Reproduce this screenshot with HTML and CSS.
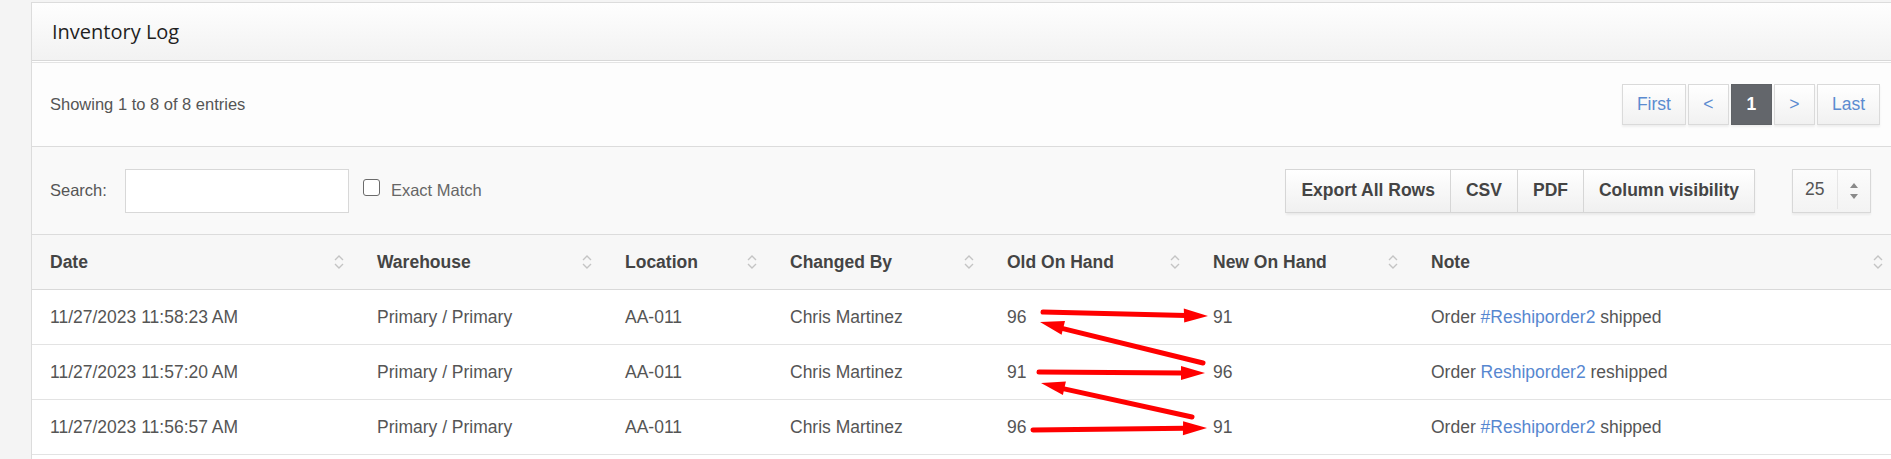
FILE: index.html
```html
<!DOCTYPE html>
<html lang="en">
<head>
    <meta charset="utf-8"/>
    <title>Inventory Log</title>
    <link rel="stylesheet" href="styles.css">
</head>
<body>
<div class="panel">
    <div class="panelHeading">
        <h2 class="panelTitle">Inventory Log</h2>
    </div>

    <div class="infoBar">
        <div class="info">Showing 1 to 8 of 8 entries</div>
        <div class="pager">
            <a class="pageBtn">First</a>
            <a class="pageBtn">&lt;</a>
            <a class="pageBtn current">1</a>
            <a class="pageBtn">&gt;</a>
            <a class="pageBtn">Last</a>
        </div>
    </div>

    <div class="toolbar">
        <label class="searchLabel">Search:</label>
        <input type="text" class="searchBox"/>
        <span class="checkBox"></span>
        <span class="exactLabel">Exact Match</span>

        <div class="exportGroup">
            <button class="exportBtn">Export All Rows</button>
            <button class="exportBtn">CSV</button>
            <button class="exportBtn">PDF</button>
            <button class="exportBtn">Column visibility</button>
        </div>
        <div class="pageLength">
            <span class="lengthValue">25</span>
            <span class="spinner">
                <svg width="10" height="18" viewBox="0 0 10 18"><path d="M5 1 L9 6 L1 6 Z M5 17 L9 12 L1 12 Z" fill="#8a8a8a"/></svg>
            </span>
        </div>
    </div>

    <table class="logTable">
        <colgroup>
            <col style="width:327px">
            <col style="width:248px">
            <col style="width:165px">
            <col style="width:217px">
            <col style="width:206px">
            <col style="width:218px">
            <col>
        </colgroup>
        <thead>
        <tr>
            <th><div class="thInner">Date<svg class="sortIcon" viewBox="0 0 12 18"><path d="M2 7 L6 3 L10 7 M2 11 L6 15 L10 11"/></svg></div></th>
            <th><div class="thInner">Warehouse<svg class="sortIcon" viewBox="0 0 12 18"><path d="M2 7 L6 3 L10 7 M2 11 L6 15 L10 11"/></svg></div></th>
            <th><div class="thInner">Location<svg class="sortIcon" viewBox="0 0 12 18"><path d="M2 7 L6 3 L10 7 M2 11 L6 15 L10 11"/></svg></div></th>
            <th><div class="thInner">Changed By<svg class="sortIcon" viewBox="0 0 12 18"><path d="M2 7 L6 3 L10 7 M2 11 L6 15 L10 11"/></svg></div></th>
            <th><div class="thInner">Old On Hand<svg class="sortIcon" viewBox="0 0 12 18"><path d="M2 7 L6 3 L10 7 M2 11 L6 15 L10 11"/></svg></div></th>
            <th><div class="thInner">New On Hand<svg class="sortIcon" viewBox="0 0 12 18"><path d="M2 7 L6 3 L10 7 M2 11 L6 15 L10 11"/></svg></div></th>
            <th><div class="thInner">Note<svg class="sortIcon" viewBox="0 0 12 18"><path d="M2 7 L6 3 L10 7 M2 11 L6 15 L10 11"/></svg></div></th>
        </tr>
        </thead>
        <tbody>
        <tr>
            <td>11/27/2023 11:58:23 AM</td>
            <td>Primary / Primary</td>
            <td>AA-011</td>
            <td>Chris Martinez</td>
            <td>96</td>
            <td>91</td>
            <td>Order <a class="orderLink">#Reshiporder2</a> shipped</td>
        </tr>
        <tr>
            <td>11/27/2023 11:57:20 AM</td>
            <td>Primary / Primary</td>
            <td>AA-011</td>
            <td>Chris Martinez</td>
            <td>91</td>
            <td>96</td>
            <td>Order <a class="orderLink">Reshiporder2</a> reshipped</td>
        </tr>
        <tr>
            <td>11/27/2023 11:56:57 AM</td>
            <td>Primary / Primary</td>
            <td>AA-011</td>
            <td>Chris Martinez</td>
            <td>96</td>
            <td>91</td>
            <td>Order <a class="orderLink">#Reshiporder2</a> shipped</td>
        </tr>
        </tbody>
    </table>
</div>

<!-- red annotation arrows drawn over the screenshot -->
<svg class="annotations" width="1891" height="459" viewBox="0 0 1891 459">
    <g stroke="#f00" stroke-width="5" stroke-linecap="round" fill="none">
        <line x1="1043" y1="312" x2="1186" y2="315.4"/>
        <line x1="1203" y1="363" x2="1062" y2="328.4"/>
        <line x1="1039" y1="372" x2="1183" y2="372.9"/>
        <line x1="1192" y1="417" x2="1063" y2="388.6"/>
        <line x1="1033" y1="430" x2="1185" y2="428.3"/>
    </g>
    <g fill="#f00">
        <polygon points="1208,316 1183.8,308.4 1184.2,322.4"/>
        <polygon points="1040,322 1065.0,321.1 1061.6,334.7"/>
        <polygon points="1205,373 1181,365.9 1181,379.9"/>
        <polygon points="1041,383 1065.9,381.5 1062.9,395.1"/>
        <polygon points="1207,428 1183.1,421.3 1182.9,435.3"/>
    </g>
</svg>
</body>
</html>
```

FILE: styles.css
```css
body{
    margin: 0;
    background: #f4f4f4;
    font-family: "Liberation Sans", Arial, sans-serif;
    font-size: 17.5px;
    color: #555;
    overflow: hidden;
    position: relative;
    height: 459px;
}
.panel{
    margin: 2px -8px 0 31px;
    padding-bottom: 40px;
    border: 1px solid #dcdcdc;
    background: #fff;
}
.panelHeading{
    height: 57px;
    padding: 0 20px;
    display: flex;
    align-items: center;
    background: linear-gradient(#fefefe, #f2f2f2);
    border-bottom: 1px solid #d8d8d8;
}
.panelTitle{
    margin: 0;
    font-family: "Open Sans", sans-serif;
    font-size: 20px;
    font-weight: 400;
    color: #1f1f1f;
}
.infoBar{
    margin-top: 1px;
    border-top: 1px solid #e4e4e4;
    border-bottom: 1px solid #dcdcdc;
    height: 83px;
    padding: 0 18px;
    display: flex;
    align-items: center;
    justify-content: space-between;
    background: #fdfdfd;
}
.info{
    font-size: 16.5px;
}
.pager{
    display: flex;
    gap: 2px;
}
.pageBtn{
    box-sizing: border-box;
    height: 41px;
    min-width: 41px;
    padding: 0 14px;
    display: flex;
    align-items: center;
    justify-content: center;
    border: 1px solid #dadada;
    background: linear-gradient(#fff, #f1f1f1);
    box-shadow: 0 2px 2px rgba(0,0,0,0.06);
    color: #5b8bd0;
}
.pageBtn.current{
    padding: 0;
    border-color: #5f6266;
    background: #63666b;
    color: #fff;
    font-weight: bold;
}
.toolbar{
    height: 87px;
    padding: 0 18px;
    display: flex;
    align-items: center;
    background: #f9f9f9;
    border-bottom: 1px solid #dcdcdc;
}
.searchLabel{
    font-size: 16.5px;
    color: #555;
}
.searchBox{
    flex: none;
    margin-left: 18px;
    padding: 0 8px;
    box-sizing: border-box;
    width: 224px;
    height: 44px;
    border: 1px solid #d8d8d8;
    background: #fff;
    font: inherit;
}
.checkBox{
    flex: none;
    margin-left: 14px;
    margin-top: -6px;
    width: 15px;
    height: 15px;
    border: 1.5px solid #6b6b6b;
    border-radius: 3px;
    background: #fff;
}
.exactLabel{
    margin-left: 11px;
    font-size: 16.5px;
    color: #666;
}
.exportGroup{
    flex: none;
    margin-left: auto;
    display: flex;
    box-shadow: 0 2px 2px rgba(0,0,0,0.06);
}
.exportBtn{
    height: 44px;
    padding: 0 15px;
    border: 1px solid #d6d6d6;
    margin-left: -1px;
    background: linear-gradient(#fff, #f0f0f0);
    font-family: inherit;
    font-size: 17.5px;
    font-weight: bold;
    color: #444;
}
.pageLength{
    flex: none;
    box-sizing: border-box;
    margin-left: 37px;
    margin-right: 9px;
    width: 79px;
    height: 44px;
    display: flex;
    border: 1px solid #d8d8d8;
    background: linear-gradient(#fcfcfc, #f3f3f3);
    box-shadow: 0 2px 2px rgba(0,0,0,0.05);
}
.lengthValue{
    width: 45px;
    padding-left: 12px;
    box-sizing: border-box;
    display: flex;
    align-items: center;
    color: #555;
    border-right: 1px solid #e6e6e6;
    margin-bottom: 3px;
}
.spinner{
    flex: 1;
    display: flex;
    align-items: center;
    justify-content: center;
}
.logTable{
    width: 100%;
    border-collapse: collapse;
    table-layout: fixed;
}
.logTable th{
    height: 54px;
    padding: 0 14px 0 18px;
    background: #f7f7f7;
    border-bottom: 1px solid #d9d9d9;
    text-align: left;
    font-weight: bold;
    color: #444;
}
.thInner{
    display: flex;
    align-items: center;
    justify-content: space-between;
}
.sortIcon{
    width: 12px;
    height: 18px;
    fill: none;
    stroke: #c4c4c4;
    stroke-width: 1.4;
}
.logTable td{
    height: 54px;
    padding: 0 18px;
    border-bottom: 1px solid #e3e3e3;
    white-space: nowrap;
}
.orderLink{
    color: #5787d0;
}
.annotations{
    position: absolute;
    left: 0;
    top: 0;
    pointer-events: none;
}
```
